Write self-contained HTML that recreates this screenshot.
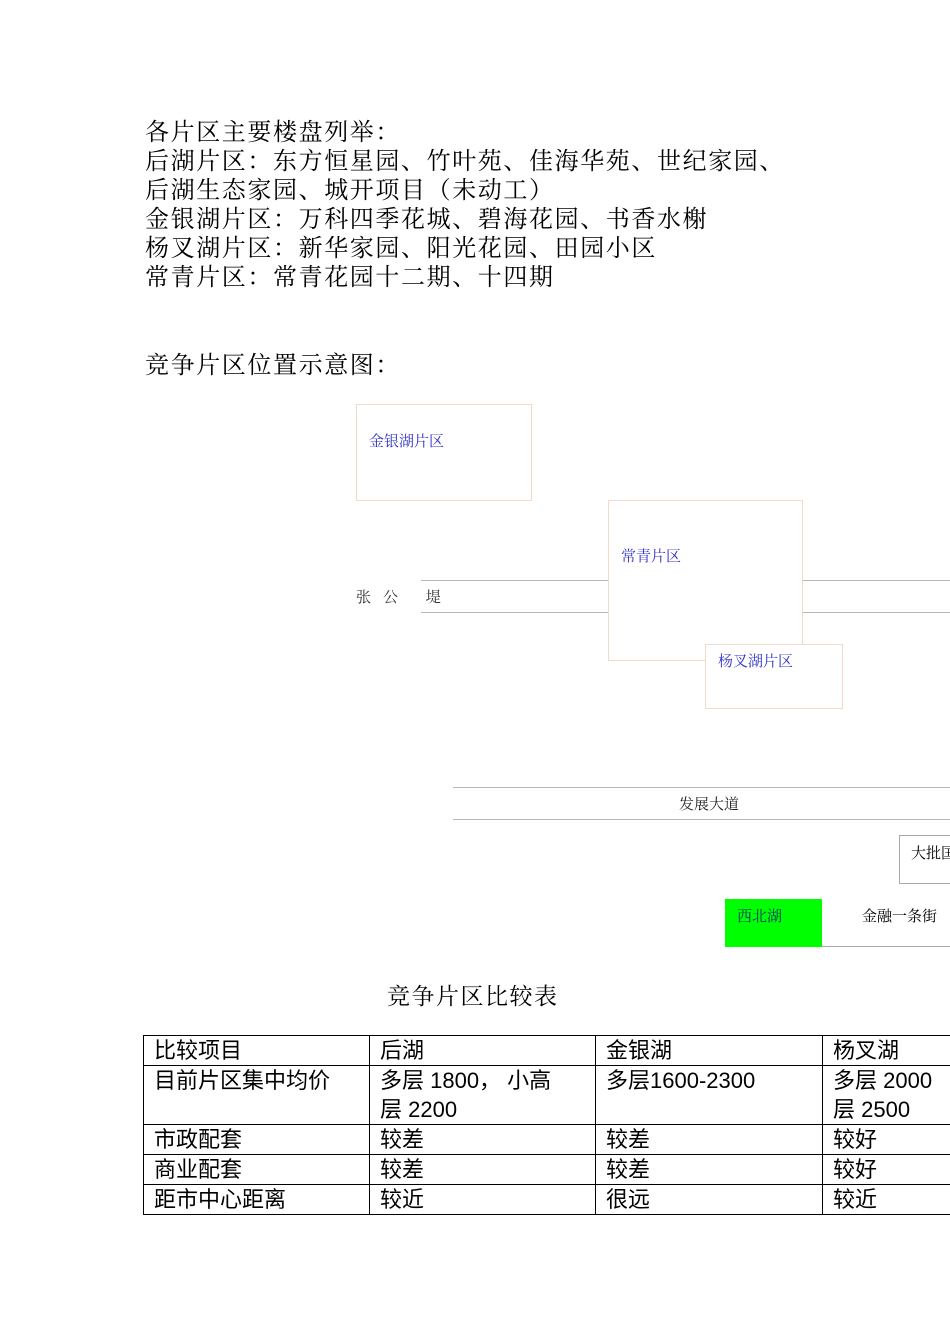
<!DOCTYPE html>
<html><head><meta charset="utf-8"><style>
body{margin:0;width:950px;height:1344px;background:#fff;position:relative;overflow:hidden;font-family:"Liberation Serif","Noto Serif CJK SC",serif;color:#000}
.t{position:absolute;left:145px;font-size:24px;letter-spacing:1.6px;line-height:29px;white-space:nowrap}
.a{position:absolute;white-space:nowrap}
.box{position:absolute;border:1px solid #f3d9c6;background:#fff}
.bl{color:#3333cc;font-size:15px}
.ln{position:absolute;height:1px;background:#b8b8b8}
table{position:absolute;left:143px;top:1035px;width:906px;border-collapse:collapse;font-family:"Liberation Sans","Noto Sans CJK SC",sans-serif;font-size:22px;table-layout:fixed}
td{border:1px solid #000;vertical-align:top;padding:0 0 0 10px;line-height:29px;height:29px;white-space:nowrap;overflow:hidden}
</style></head><body>
<div class="t" style="top:119px">各片区主要楼盘列举：<br>后湖片区：东方恒星园、竹叶苑、佳海华苑、世纪家园、<br>后湖生态家园、城开项目（未动工）<br>金银湖片区：万科四季花城、碧海花园、书香水榭<br>杨叉湖片区：新华家园、阳光花园、田园小区<br>常青片区：常青花园十二期、十四期</div>
<div class="t" style="top:352px">竞争片区位置示意图：</div>

<div class="ln" style="left:421px;top:580px;width:529px"></div>
<div class="ln" style="left:421px;top:612px;width:529px"></div>
<div class="a" style="left:356px;top:586px;font-size:15px;color:#333;letter-spacing:12px">张公 堤</div>
<div class="box" style="left:356px;top:404px;width:174px;height:95px"><div class="a bl" style="left:12px;top:25px">金银湖片区</div></div>
<div class="box" style="left:608px;top:500px;width:193px;height:159px"><div class="a bl" style="left:12px;top:44px">常青片区</div></div>
<div class="box" style="left:705px;top:644px;width:136px;height:63px"><div class="a bl" style="left:12px;top:5px">杨叉湖片区</div></div>

<div class="ln" style="left:453px;top:787px;width:497px"></div>
<div class="ln" style="left:453px;top:819px;width:497px"></div>
<div class="a" style="left:679px;top:793px;font-size:15px;color:#222">发展大道</div>
<div class="a" style="left:899px;top:835px;width:60px;height:47px;border:1px solid #aaa;font-size:15px"><span style="position:absolute;left:11px;top:6px">大批国</span></div>
<div class="a" style="left:725px;top:899px;width:97px;height:48px;background:#00ff00"><span style="position:absolute;left:12px;top:6px;font-size:15px;color:#0a3a6a">西北湖</span></div>
<div class="a" style="left:822px;top:899px;width:128px;height:47px;border-bottom:1px solid #aaa"><span style="position:absolute;left:40px;top:6px;font-size:15px">金融一条街</span></div>

<div class="a" style="left:387px;top:978px;font-size:23px;letter-spacing:1.5px">竞争片区比较表</div>

<table>
<colgroup><col style="width:226px"><col style="width:226px"><col style="width:227px"><col style="width:227px"></colgroup>
<tr><td>比较项目</td><td>后湖</td><td>金银湖</td><td>杨叉湖</td></tr>
<tr><td style="height:58px">目前片区集中均价</td><td>多层 1800， 小高<br>层 2200</td><td>多层1600-2300</td><td>多层 2000<br>层 2500</td></tr>
<tr><td>市政配套</td><td>较差</td><td>较差</td><td>较好</td></tr>
<tr><td>商业配套</td><td>较差</td><td>较差</td><td>较好</td></tr>
<tr><td>距市中心距离</td><td>较近</td><td>很远</td><td>较近</td></tr>
</table>
</body></html>
